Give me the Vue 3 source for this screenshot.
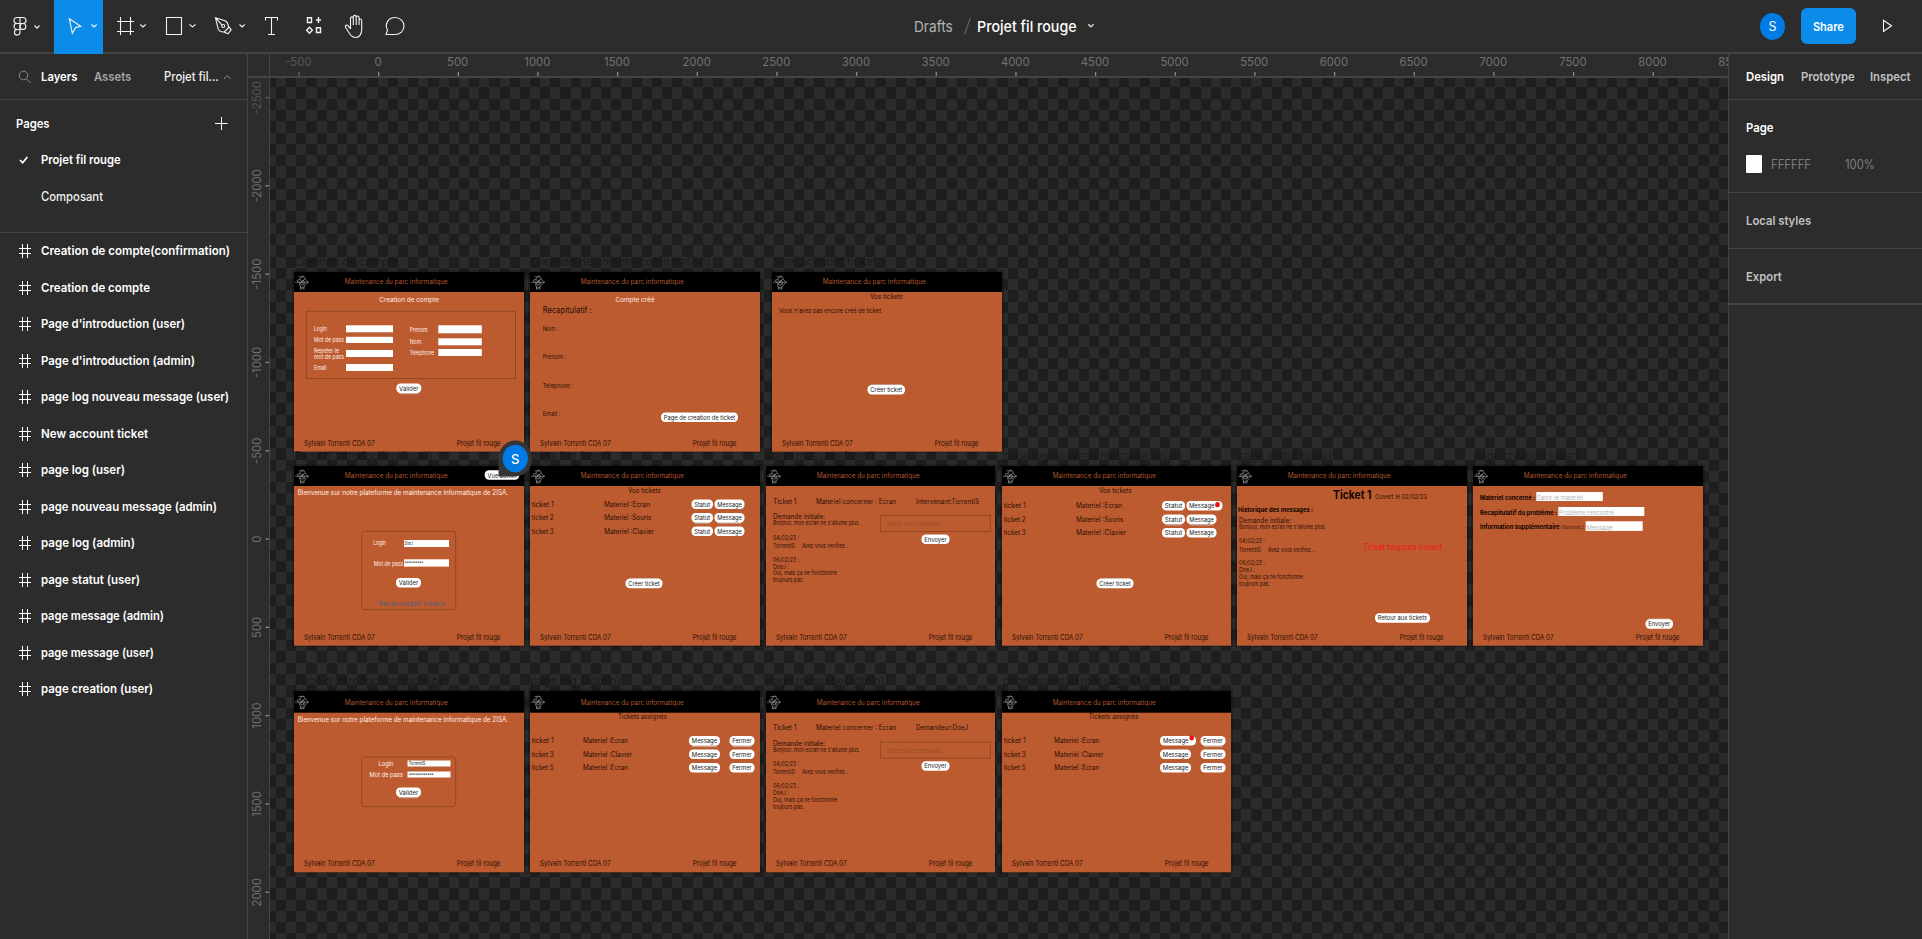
<script setup>
const layers = [
  'Creation de compte(confirmation)',
  'Creation de compte',
  "Page d'introduction (user)",
  "Page d'introduction (admin)",
  'page log nouveau message (user)',
  'New account ticket',
  'page log (user)',
  'page nouveau message (admin)',
  'page log (admin)',
  'page statut (user)',
  'page message (admin)',
  'page message (user)',
  'page creation (user)'
]
const layerWidths = [189, 109, 144, 154, 188, 107, 84, 176, 94, 99, 123, 113, 112]

const hTicks = Array.from({ length: 19 }, (_, i) => ({ v: -500 + i * 500, x: 378 + (i - 1) * 79.66 - 270 }))
const vTicks = Array.from({ length: 10 }, (_, i) => ({ v: -2500 + i * 500, y: 97.6 + i * 88.3 - 78 }))

// Checkerboard snapped to whole pixels
let checker = ''
for (let r = -1; r < 77; r++) {
  const y0 = Math.round(87.4 + r * 11.28)
  const y1 = Math.round(87.4 + (r + 1) * 11.28)
  for (let c = -1; c < 144; c++) {
    if ((r + c) % 2 !== 0) continue
    const x0 = Math.round(276 + c * 10.16)
    const x1 = Math.round(276 + (c + 1) * 10.16)
    checker += `M${x0} ${y0}H${x1}V${y1}H${x0}z`
  }
}

// Drawing primitives in frame-local coordinates
const T = (x, y, w, text, s = 7, c = 'ink', b = false) => ({ k: 't', x, y, w, text, s: s * 0.96, c, b })
const I = (x, y, w, h) => ({ k: 'i', x, y, w, h })
const O = (x, y, w, h, r = 0) => ({ k: 'o', x, y, w, h, r })
const B = (x, y, w, text, pad = 5, shade = 0) => [
  ...(shade ? [{ k: 's', x: x + 3, y: shade < 0 ? y - 0.8 : y + 1.2, w: w - 6, h: 9.6 }] : []),
  { k: 'b', x, y, w, h: 9.5 },
  T(x + pad / 2 + 0.3, y + 7.1, w - pad - 0.6, text, 6.8, 'btn')
]
const D = (x, y) => ({ k: 'd', x, y })

const ticketsUser = (dy, dx) => ['Ecran', 'Souris', 'Clavier'].flatMap((m, i) => {
  const y = 40.7 + dy * 0.8 + i * 13.5
  return [
    T(1.7, y, 22, 'ticket ' + (i + 1), 7.6),
    T(74, y, [46, 47.5, 50][i], 'Materiel :' + m, 7.6),
    ...B(161.5 - dx, y - 7.2, 21.5 + dx, 'Statut', 5, i === 1 ? 1 : 0),
    ...(dx && i === 0
      ? [{ k: 'b', x: 184.5, y: y - 7.2, w: 36, h: 9.5 }, T(187, y - 0.1, 25.5, 'Message', 6.8, 'btn'), D(215.5, 38.7)]
      : B(184.5, y - 7.2, 30, 'Message', 5, i === 1 ? 1 : 0))
  ]
})
const ticketsAdmin = (mark) => [1, 3, 5].flatMap((n, i) => {
  const y = 52.3 + i * 13.4
  const x0 = mark ? 158 : 159
  return [
    T(1.7, y, 22, 'ticket ' + n, 7.6),
    T(mark ? 52.3 : 53, y, i === 1 ? 49 : 45, 'Materiel :' + (i === 1 ? 'Clavier' : 'Ecran'), 7.6),
    ...(mark && i === 0
      ? [{ k: 'b', x: x0, y: y - 7.2, w: 36, h: 9.5 }, T(x0 + 3, y - 0.1, 25.5, 'Message', 6.8, 'btn'), D(189.7, 46.8)]
      : B(x0, y - 7.2, 31, 'Message', 5, i === 0 ? 1 : 0)),
    ...B(mark ? 198.5 : 199.5, y - 7.2, 25, 'Fermer', 5, i === 0 ? 1 : 0)
  ]
})
const thread = (x, y) => [
  T(x, y, 52, 'Demande initiale:', 7.4),
  T(x, y + 6, 87, "Bonjour, mon ecran ne s'allume plus.", 6.2),
  T(x, y + 20.4, 26, '04/02/23 :', 6.4),
  T(x, y + 28.5, 23, 'TorrentiS:', 6.4),
  T(x + 29, y + 28.5, 47, 'Avez vous verifiez...', 6.4),
  T(x, y + 42.3, 26, '06/02/23 :', 6.2),
  T(x, y + 49.3, 16, 'DoeJ :', 6.2),
  T(x, y + 56.2, 64, 'Oui, mais ça ne fonctionne', 6.2),
  T(x, y + 63, 31, 'toujours pas.', 6.2)
]
const message = (dy, who, ww) => [
  T(7, 37.7 + dy, 23.5, 'Ticket 1', 7.4),
  T(50, 37.7 + dy, 80, 'Materiel concerner : Ecran', 7.4),
  T(150, 37.7 + dy, ww, who, 7.4),
  ...thread(7, 53.2 + dy),
  O(114.3, 49.5 + dy, 110, 16),
  T(121, 60.3 + dy, 58, 'Entrez votre message...', 6.4, 'faint'),
  ...B(155.5, 68.6 + dy, 28, 'Envoyer')
]
const hello = (y) => T(3.7, y, 210.5, 'Bienvenue sur notre plateforme de maintenance informatique de 2ISA.', 7.2, 'light')

const R1 = { y: 272, h: 179.7, head: 20, title: 12.2, foot: 173.7 }
const R2 = { y: 466, h: 179.7, head: 20, title: 11.8, foot: 173.7 }
const R3 = { y: 691, h: 181.3, head: 21.7, title: 13.7, foot: 175.3 }

const frames = [
  { ...R1, x: 294, name: 'Creation de compte', nw: 104, items: [
    T(85.3, 29.5, 59.7, 'Creation de compte', 7, 'light'),
    O(12.3, 39.2, 209.3, 67.2),
    T(20, 59, 13, 'Login', 6, 'light'), T(20, 70, 30, 'Mot de pass', 6, 'light'),
    T(20, 81, 25, 'Repeter le', 6, 'light'), T(20, 87.3, 30, 'mot de pass', 6, 'light'),
    T(20, 98, 12.5, 'Email', 6, 'light'),
    T(115.7, 59.5, 18, 'Prenom', 6, 'light'), T(115.7, 71.5, 11.5, 'Nom', 6, 'light'),
    T(115.7, 82.5, 24.5, 'Telephone', 6, 'light'),
    I(52, 53.3, 47, 7), I(52, 64.8, 47, 6.2), I(52, 78, 47, 7), I(52, 92, 47, 7),
    I(144.3, 53.3, 43.5, 8), I(144.3, 66.3, 43.5, 7), I(144.3, 77, 43.5, 7),
    ...B(102.3, 111.5, 25, 'Valider', 5, 1)
  ] },
  { ...R1, x: 530, name: 'Creation de compte(confirmation)', nw: 180, items: [
    T(85.5, 29.5, 39, 'Compte créé', 7, 'light'),
    T(12.7, 40.7, 49, 'Recapitulatif :', 8.8),
    T(12.7, 58.5, 15.5, 'Nom :', 7), T(12.7, 87, 23.5, 'Prenom :', 7),
    T(12.7, 115.5, 30.5, 'Telephone :', 7), T(12.7, 143.8, 17.5, 'Email :', 6.6),
    ...B(131, 140.5, 77, 'Page de creation de ticket')
  ] },
  { ...R1, x: 772, name: 'New account ticket', nw: 104, items: [
    T(98, 26.5, 33, 'Vos tickets', 7.6),
    T(7, 40.5, 102, "Vous n'avez pas encore créé de ticket", 7),
    ...B(95.5, 113, 37.5, 'Créer ticket', 5, -1)
  ] },
  { ...R2, x: 294, name: "Page d'introduction (user)", nw: 138, items: [
    { k: 'b', x: 190.7, y: 4.3, w: 34.5, h: 9.5 }, T(193.5, 11.5, 29, 'Vue admin', 6.8, 'btn'),
    hello(29.3),
    O(67.7, 65.3, 94, 78.3, 3),
    T(79.3, 79.3, 12.7, 'Login', 6.2, 'light'), I(110, 74, 45, 7), T(110.5, 78.8, 8.5, 'DoeJ', 5, 'btn'),
    T(79.8, 99.6, 29.5, 'Mot de pass', 6.2, 'light'), I(110, 93.3, 45, 7.3), T(110.5, 99.5, 18.5, '**********', 6, 'btn'),
    ...B(102, 112, 25, 'Valider'),
    T(85, 140, 66.5, 'Pas de compte? creation', 6.6, 'link')
  ] },
  { ...R2, x: 530, name: 'page log (user)', nw: 80, items: [
    T(98, 26.5, 33, 'Vos tickets', 7.6), ...ticketsUser(0, 0), ...B(95.5, 112.8, 37, 'Créer ticket', 5, -1)
  ] },
  { ...R2, x: 766, w: 229, name: 'page message(user)', nw: 108, items: message(0, 'Intervenant:TorrentiS', 63) },
  { ...R2, x: 1002, w: 229, name: 'page log nouveau message (user)', nw: 180, items: [
    T(97, 26.5, 33, 'Vos tickets', 7.6), ...ticketsUser(2, 1.5), ...B(94.5, 112.8, 37, 'Créer ticket', 5, -1)
  ] },
  { ...R2, x: 1237, name: 'page statut (user)', nw: 95, items: [
    T(96, 33, 38.5, 'Ticket 1', 11.6, 'black', true), T(138, 32.5, 52, 'Ouvert le 02/02/23', 7),
    T(1, 45.7, 75, 'Historique des messages :', 6.8, 'black', true),
    ...thread(2, 57),
    T(126, 83.7, 79, 'Ticket toujours ouvert', 9.2, 'red'),
    ...B(138, 147.3, 55, 'Retour aux tickets')
  ] },
  { ...R2, x: 1473, name: 'page creation (user)', nw: 106, items: [
    T(7, 33.8, 55, 'Materiel concerné :', 6.8, 'black', true), I(63.3, 26, 66.5, 9), T(64, 34, 46, 'Saisir le materiel', 7, 'ph'),
    T(7, 48.7, 77, 'Recapitulatif du problème :', 6.8, 'black', true), I(85.3, 41, 86, 9), T(86, 48.7, 55, 'Problème rencontré', 7, 'ph'),
    T(7, 63.3, 79.5, 'Information supplémentaire', 6.8, 'black', true), T(88, 63, 20, '(Optionnel)', 4.6),
    T(109, 63.3, 1.8, ':', 6.8, 'black', true), I(112.7, 55.3, 57, 9.6), T(113.5, 63.5, 26, 'Message', 7, 'ph'),
    ...B(172.5, 153.3, 27.5, 'Envoyer', 5, -1)
  ] },
  { ...R3, x: 294, name: "Page d'introduction (admin)", nw: 148, items: [
    hello(31.3),
    O(67.7, 66, 94, 49.7, 3),
    T(84.5, 75.3, 15, 'Login', 7, 'light'), I(113.5, 69.5, 43, 6), T(114.7, 74, 16.5, 'TorrentiS', 5, 'btn'),
    T(75.5, 86.3, 33.5, 'Mot de pass', 7, 'light'), I(113.5, 80.5, 43, 6), T(114.7, 87, 25, '************', 6, 'btn'),
    ...B(102, 96.4, 25, 'Valider', 5, 1)
  ] },
  { ...R3, x: 530, name: 'page log (admin)', nw: 90, items: [T(88, 28.3, 49, 'Tickets assignés', 7.6), ...ticketsAdmin(false)] },
  { ...R3, x: 766, w: 229, name: 'page message(admin)', nw: 118, items: message(1.6, 'Demandeur:DoeJ', 52) },
  { ...R3, x: 1002, w: 229, name: 'page nouveau message (admin)', nw: 170, items: [T(86.7, 28.3, 50, 'Tickets assignés', 7.6), ...ticketsAdmin(true)] }
]
</script>

<template>
  <div class="app">
    <header class="toolbar">
      <div class="tools">
        <svg class="tool" width="54" height="54" viewBox="0 0 54 54">
          <path d="M20 17.5h-3a3 3 0 0 0 0 6h3zM20 17.5h3a3 3 0 0 1 0 6h-3zM20 23.5h-3a3 3 0 0 0 0 6h3zM20 29.5h-3a2.8 2.8 0 1 0 3 2.8z" />
          <ellipse cx="22.9" cy="26.5" rx="2.9" ry="3" />
          <path d="M34.5 25.5l2.5 2.6 2.5-2.6" />
        </svg>
        <svg class="tool active" width="49" height="54" viewBox="54 0 49 54">
          <path d="M69.3 18.7l11.5 7.6-5.2 1.3-3.3 5.6z" /><path d="M91.5 24.5l2.6 2.4 2.6-2.4" />
        </svg>
        <svg class="tool" width="49" height="54" viewBox="103 0 49 54">
          <path d="M120.5 17v18M130.5 17v18M117 21.5h17M117 31.5h17" /><path d="M140.3 24.5l2.7 2.4 2.7-2.4" />
        </svg>
        <svg class="tool" width="49" height="54" viewBox="152 0 49 54">
          <path d="M166.5 17.5h15v17h-15z" /><path d="M189.5 24.5l3 2.4 3-2.4" />
        </svg>
        <svg class="tool" width="51" height="54" viewBox="201 0 51 54">
          <path d="M215.5 17.8l9.5 3c2 .9 3 3 3.4 5.4l2.8 3.6-3.2 4-4-1.8c-3.2.2-5.2-1.2-6-3.6zM216 18.2l6 7" />
          <circle cx="223.2" cy="26" r="1.5" /><path d="M224.2 32l5-5" /><path d="M239.5 24.5l2.6 2.4 2.6-2.4" />
        </svg>
        <svg class="tool" width="38" height="54" viewBox="252 0 38 54">
          <path d="M265.5 20.5v-3h12v3M271.5 17.5v17M268 34.5h7" />
        </svg>
        <svg class="tool" width="42" height="54" viewBox="290 0 42 54">
          <path d="M307.5 17.8h4v4.7h-4zM316.5 27.8h4v4.7h-4zM309.5 27.2l2.8 3-2.8 3-2.8-3zM318.5 17v6M316 20h5" stroke-width="1.4" />
        </svg>
        <svg class="tool" width="40" height="54" viewBox="332 0 40 54">
          <path d="M350.5 29V18.500c0-2.200 2.800-2.200 2.800 0V25M353.300 24v-7c0-2.200 2.900-2.200 2.900 0v8M356.200 24v-6.500c0-2 2.900-2 2.900 0V25M359.100 24v-3.500c0-2 2.600-2 2.600 0v9c0 4.500-2.300 8-5.700 8-3.600 0-5-1.500-6.500-4l-4-6.200c-.9-1.800 1.500-3 2.700-1.400l2.300 3" />
        </svg>
        <svg class="tool" width="42" height="54" viewBox="372 0 42 54">
          <path d="M386 34.500l1.600-4.200c-3.500-6 .7-12.800 7.200-12.800 5.600 0 9.200 4 9.200 8.600s-3.600 8.400-9.200 8.400z" />
        </svg>
      </div>
      <div class="title">
        <span class="sx drafts">Drafts</span>
        <svg class="slash" width="10" height="20" viewBox="0 0 10 20"><path d="M1.500 18.500L7.500 1.500" fill="none" stroke="#6e6e6e" /></svg>
        <span class="sx file">Projet fil rouge</span>
        <svg class="more" width="8" height="6" viewBox="0 0 8 6"><path d="M1.200 1.200l2.700 2.600 2.700-2.600" fill="none" stroke="#ddd" stroke-width="1.200" /></svg>
      </div>
      <div class="actions">
        <div class="avatar">S</div>
        <button class="share"><span>Share</span></button>
        <svg width="12" height="16" viewBox="0 0 12 16"><path d="M1.500 2.200v11.300l8-5.700z" fill="none" stroke="#fff" stroke-width="1.100" /></svg>
      </div>
    </header>

    <div class="main">
      <aside class="left">
        <div class="tabs">
          <svg width="14" height="14" viewBox="0 0 14 14"><circle cx="5.500" cy="5.500" r="4.300" /><path d="M8.700 9l4 4" /></svg>
          <span class="sx on tab1">Layers</span>
          <span class="sx dim tab2">Assets</span>
          <span class="sx med tab3">Projet fil...</span>
          <svg class="up" width="9" height="6" viewBox="0 0 9 6"><path d="M1 5l3.300-3.500L7.600 5" /></svg>
        </div>
        <div class="pages">
          <div class="pages-head">
            <span class="sx on">Pages</span>
            <svg width="13" height="13" viewBox="0 0 13 13"><path d="M6.500 0v13M0 6.500h12.500" stroke="#fff" /></svg>
          </div>
          <div class="page-row">
            <svg width="10" height="8" viewBox="0 0 10 8"><path d="M1 4l2.700 2.700L8.300 1" fill="none" stroke="#fff" stroke-width="1.700" /></svg>
            <span class="sx on">Projet fil rouge</span>
          </div>
          <div class="page-row"><span class="sx med">Composant</span></div>
        </div>
        <ul class="layers">
          <li v-for="(l, i) in layers" :key="l">
            <svg class="hash" width="12" height="14" viewBox="0 0 12 14"><path d="M3.500 0v14M8.500 0v14M0 4.500h12M0 9.500h12" /></svg>
            <svg class="name" width="204" height="20"><text x="0" y="14.400" :textLength="layerWidths[i]" lengthAdjust="spacingAndGlyphs">{{ l }}</text></svg>
          </li>
        </ul>
      </aside>

      <section class="stage">
        <div class="corner"></div>
        <svg class="ruler-h" width="1458" height="24">
          <g v-for="t in hTicks" :key="t.v" :class="{ fade: t.v < 0 }">
            <text :x="t.x" y="12" text-anchor="middle">{{ t.v }}</text>
            <rect :x="t.x" y="18" width="1.300" height="4" />
          </g>
        </svg>
        <svg class="ruler-v" width="23" height="861">
          <g v-for="t in vTicks" :key="t.v" :class="{ fade: t.v === -2500 }">
            <text :transform="`translate(12.500 ${t.y}) rotate(-90)`" text-anchor="middle">{{ t.v }}</text>
            <rect x="17.500" :y="t.y - 0.700" width="4" height="1.300" />
          </g>
        </svg>
        <svg class="canvas" width="1458" height="861" viewBox="270 78 1458 861">
          <rect x="270" y="78" width="1458" height="861" fill="#2b2b2b" />
          <path :d="checker" fill="#1e1e1e" shape-rendering="crispEdges" />
          <g v-for="f in frames" :key="f.name" :transform="`translate(${f.x} ${f.y})`">
            <text class="fname" x="0.500" y="-6" :textLength="f.nw" lengthAdjust="spacingAndGlyphs">{{ f.name }}</text>
            <rect x="-2" y="-2" :width="(f.w || 230) + 4" :height="f.h + 3" fill="#000" opacity=".2" />
            <rect :width="f.w || 230" :height="f.h" fill="#bd5b30" />
            <rect :width="f.w || 230" :height="f.head" fill="#000" />
            <g class="logo" :transform="`translate(8 ${f.head / 2 + 0.300})`">
              <path d="M-7 0h14M-5 -2l3 -1 2 -3.500 2.500 1.500 1.500 3 2.500 2-3 2.500-1.500 2.500h-3.500l-1-3.500zM-2 6.500h4M-3.500 -5.500h6M-1.500 4v3M2 4v3" />
              <path d="M-3 -1.500l2 2 2-3 2 3-2 2.500-3-1.500M-2.500 -3.500l5 6M3 -3.500l-5.500 6" />
            </g>
            <text class="brand" x="50.700" :y="f.title" textLength="103" lengthAdjust="spacingAndGlyphs">Maintenance du parc informatique</text>
            <template v-for="(n, i) in f.items" :key="i">
              <text v-if="n.k === 't'" :x="n.x" :y="n.y" :textLength="n.w" lengthAdjust="spacingAndGlyphs" :font-size="n.s" :class="[n.c, { bold: n.b }]">{{ n.text }}</text>
              <rect v-else-if="n.k === 'i'" :x="n.x" :y="n.y" :width="n.w" :height="n.h" fill="#fff" />
              <rect v-else-if="n.k === 'o'" :x="n.x" :y="n.y" :width="n.w" :height="n.h" :rx="n.r" class="outline" />
              <rect v-else-if="n.k === 's'" :x="n.x" :y="n.y" :width="n.w" :height="n.h" rx="1" class="shade" />
              <rect v-else-if="n.k === 'b'" :x="n.x" :y="n.y" :width="n.w" :height="n.h" rx="4.200" fill="#fff" />
              <g v-else :transform="`translate(${n.x} ${n.y})`"><ellipse rx="2.300" ry="2.600" fill="#f00d12" /></g>
            </template>
            <text class="ink" font-size="7.400" x="10" :y="f.foot" textLength="70.500" lengthAdjust="spacingAndGlyphs">Sylvain Torrenti CDA 07</text>
            <text class="ink" font-size="7.400" x="162.800" :y="f.foot" textLength="43.700" lengthAdjust="spacingAndGlyphs">Projet fil rouge</text>
          </g>
          <path d="M498.500 476.500V459a16.800 18 0 1 1 16.800 17.500z" fill="#333537" />
          <ellipse cx="515.300" cy="458.500" rx="12.600" ry="13.800" fill="#007be5" />
          <text x="515.300" y="463.800" text-anchor="middle" class="me">S</text>
        </svg>
      </section>

      <aside class="right">
        <div class="rtabs">
          <span class="sx on r1">Design</span><span class="sx soft r2">Prototype</span><span class="sx soft r3">Inspect</span>
        </div>
        <div class="page-props">
          <span class="sx on">Page</span>
          <div class="fill"><i class="swatch"></i><span class="sx hex">FFFFFF</span><span class="sx pct">100%</span></div>
        </div>
        <div class="sec local"><span class="sx soft">Local styles</span></div>
        <div class="sec export"><span class="sx soft">Export</span></div>
      </aside>
    </div>
  </div>
</template>

<style>
body { background: #2c2c2c; }
</style>

<style scoped>
.app { width: 1922px; height: 939px; overflow: hidden; background: #2c2c2c; color: #fff; font: 500 12.4px Inter, sans-serif; display: flex; flex-direction: column; }
.app * { box-sizing: border-box; }
.sx { display: inline-block; white-space: nowrap; transform: scaleX(.91); transform-origin: 0 50%; }
.on { font-weight: 600; color: #fff; }
.med { color: #f0f0f0; }
.dim { color: #a5a5a5; font-weight: 600; }
.soft { color: #c2c2c2; font-weight: 600; }

.toolbar { height: 54px; flex: none; border-bottom: 2px solid #444; display: grid; grid-template-columns: 914px 1fr 150px; }
.tools { display: flex; height: 54px; }
.tool { flex: none; fill: none; stroke: #f2f2f2; stroke-width: 1.1; }
.tool.active { background: #0c8ce9; }
.title { display: flex; align-items: center; height: 52px; font-size: 15px; font-weight: 400; }
.drafts { width: 49px; color: #b3b3b3; }
.file { width: 113px; margin-left: 4px; color: #fff; font-weight: 500; transform: scaleX(.95); }
.more { margin-left: -3px; }
.actions { display: flex; align-items: center; height: 52px; margin-left: -12px; }
.avatar { width: 25px; height: 27px; border-radius: 50%; background: #007be5; font-size: 12.5px; font-weight: 400; display: grid; place-items: center; }
.share { width: 55px; height: 36px; margin: 0 26px 0 16px; border: 0; padding: 0; border-radius: 6px; background: #0c8ce9; color: #fff; font: 600 12.4px Inter, sans-serif; }
.share span { display: inline-block; transform: scaleX(.89); }

.main { flex: 1; display: flex; min-height: 0; }
.left { width: 248px; flex: none; border-right: 1px solid #444; }
.tabs { height: 46px; border-bottom: 1px solid #444; display: flex; align-items: center; padding-left: 18px; }
.tabs svg { fill: none; stroke: #8a8a8a; }
.tab1 { width: 53px; margin-left: 9px; }
.tab2 { width: 70px; }
.tab3 { width: 58px; }
.tabs .up { margin-left: 1px; }
.pages { height: 133px; border-bottom: 1px solid #444; }
.pages-head { height: 41px; padding: 5px 19px 0 16px; display: flex; align-items: center; justify-content: space-between; }
.page-row { height: 37px; padding-left: 41px; display: flex; align-items: center; }
.page-row svg { margin-left: -22px; margin-right: 12px; }
.layers { list-style: none; margin: 0; padding: 0; }
.layers li { height: 36.5px; display: flex; align-items: center; padding-left: 19px; }
.hash { flex: none; fill: none; stroke: #fff; margin-right: 10px; }
.name { flex: none; overflow: visible; }
.name text { fill: #fff; font: 600 12.4px Inter, sans-serif; }

.stage { width: 1480px; flex: none; display: grid; grid-template: 24px 861px / 22px 1458px; overflow: hidden; }
.corner { border-right: 1px solid #444; border-bottom: 2px solid #444; }
.ruler-h { border-bottom: 2px solid #444; }
.ruler-v { width: 22px; border-right: 1px solid #444; }
.ruler-h text, .ruler-v text { font: 400 11.3px Inter, sans-serif; fill: #727272; }
.ruler-h rect, .ruler-v rect { fill: #8a8a8a; }
.ruler-v .fade, .ruler-h .fade { opacity: .6; }
.canvas { display: block; font-family: Inter, sans-serif; font-weight: 400; }
.fname { font-size: 11.5px; fill: #121212; opacity: .6; }
.logo { fill: none; stroke: #8d8d8d; stroke-width: .7; }
.brand { font-size: 7.2px; fill: #b0562e; }
.ink { fill: #2a1006; }
.black { fill: #100500; }
.light { fill: #fff0e8; }
.btn { fill: #1a1a1a; }
.ph { fill: #b4b4b4; }
.faint { fill: #984a28; }
.link { fill: #475a80; }
.red { fill: #f01a12; }
.bold { font-weight: 700; }
.outline { fill: none; stroke: #8a4122; stroke-width: .8; }
.shade { fill: #c9a596; }
.me { fill: #fff; font-size: 13px; font-weight: 500; }

.right { flex: 1; border-left: 1px solid #444; }
.rtabs { height: 46px; border-bottom: 1px solid #444; display: flex; align-items: center; padding-left: 17px; }
.r1 { width: 55px; }
.r2 { width: 69px; }
.page-props { height: 93px; padding: 20px 0 0 17px; border-bottom: 1px solid #444; }
.fill { display: flex; align-items: center; height: 18px; margin-top: 20px; font-weight: 400; color: #7d7d7d; }
.swatch { width: 16px; height: 18px; background: #fff; border-radius: 1px; margin-right: 9px; }
.hex { width: 74px; }
.sec { height: 56px; padding-left: 17px; display: flex; align-items: center; border-bottom: 1px solid #444; }
.export { border-bottom-width: 2px; }
</style>
